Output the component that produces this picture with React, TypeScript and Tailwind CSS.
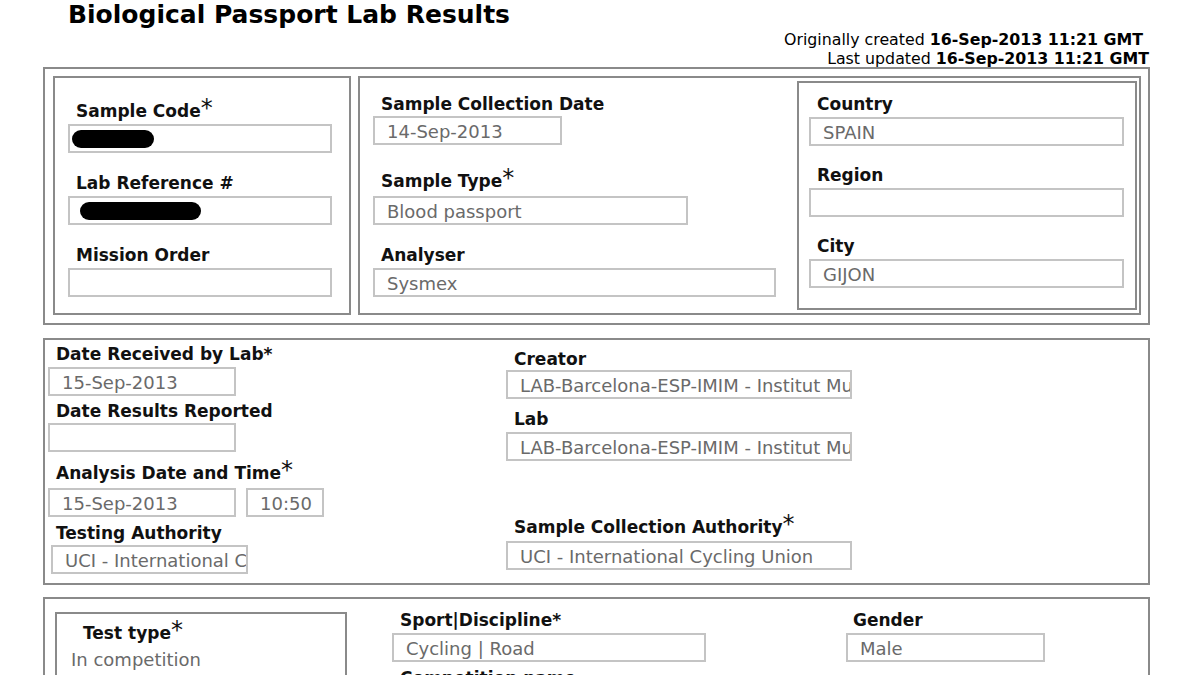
import React from "react";

const font = { fontFamily: '"DejaVu Sans", Verdana, sans-serif' };

function Star({ inline }: { inline?: boolean }) {
  if (inline) return <span>*</span>;
  return (
    <span className="font-normal text-[24px] leading-[0] align-[1px]">*</span>
  );
}

function Label({
  children,
  star,
  inline,
  className = "",
}: {
  children: React.ReactNode;
  star?: boolean;
  inline?: boolean;
  className?: string;
}) {
  return (
    <div className={`h-[20px] text-[17px] leading-[20px] font-bold text-[#111] whitespace-nowrap ${className}`}>
      {children}
      {star && <Star inline={inline} />}
    </div>
  );
}

function Input({
  value,
  width,
  className = "",
  children,
}: {
  value?: string;
  width: string;
  className?: string;
  children?: React.ReactNode;
}) {
  return (
    <div
      className={`h-[29px] ${width} border-2 border-[#c4c4c4] pl-[12px] pt-[1px] text-[18px] leading-[25px] text-[#6a6a6a] whitespace-nowrap overflow-hidden flex items-center ${className}`}
    >
      {value}
      {children}
    </div>
  );
}

function Redacted({ w, ml = "-ml-[10px]" }: { w: string; ml?: string }) {
  return <div className={`h-[18px] ${w} rounded-full bg-black ${ml}`} />;
}

export default function App() {
  return (
    <div className="w-[1200px] h-[675px] overflow-hidden bg-white text-[#111]" style={font}>
      {/* header */}
      <div className="h-[67px] flex flex-col">
        <h1 className="ml-[68px] mt-[1px] text-[25px] leading-[28px] font-bold text-black">
          Biological Passport Lab Results
        </h1>
        <div className="mr-[57px] mt-[1px] text-right text-[15.8px] leading-[19px] text-black">
          <div>
            Originally created <b>16-Sep-2013 11:21 GMT</b>
          </div>
          <div className="-mr-[6px]">
            Last updated <b>16-Sep-2013 11:21 GMT</b>
          </div>
        </div>
      </div>

      {/* section 1 */}
      <div className="ml-[43px] w-[1107px] h-[258px] border-2 border-[#8a8a8a] pl-[8px] pr-[7px] pt-[7px] pb-[8px] flex gap-[7px]">
        <div className="w-[298px] border-2 border-[#8a8a8a] pl-[13px] pt-[23px] flex flex-col">
          <Label star className="pl-[8px]">Sample Code</Label>
          <Input width="w-[264px]" className="mt-[3px]">
            <Redacted w="w-[82px]" />
          </Input>
          <Label className="pl-[8px] mt-[20px]">Lab Reference #</Label>
          <Input width="w-[264px]" className="mt-[3px]">
            <Redacted w="w-[121px]" ml="-ml-[2px]" />
          </Input>
          <Label className="pl-[8px] mt-[20px]">Mission Order</Label>
          <Input width="w-[264px]" className="mt-[3px]" />
        </div>

        <div className="flex-1 border-2 border-[#8a8a8a] pl-[13px] pr-[2px] pt-[3px] pb-[3px] flex">
          <div className="flex-1 pt-[13px] flex flex-col">
            <Label className="pl-[8px]">Sample Collection Date</Label>
            <Input width="w-[189px]" value="14-Sep-2013" className="mt-[2px]" />
            <Label star className="pl-[8px] mt-[26px]">Sample Type</Label>
            <Input width="w-[315px]" value="Blood passport" className="mt-[5px]" />
            <Label className="pl-[8px] mt-[20px]">Analyser</Label>
            <Input width="w-[403px]" value="Sysmex" className="mt-[3px]" />
          </div>
          <div className="w-[340px] border-2 border-[#8a8a8a] pl-[10px] pt-[11px] flex flex-col">
            <Label className="pl-[8px]">Country</Label>
            <Input width="w-[315px]" value="SPAIN" className="mt-[3px]" />
            <Label className="pl-[8px] mt-[19px]">Region</Label>
            <Input width="w-[315px]" className="mt-[3px]" />
            <Label className="pl-[8px] mt-[19px]">City</Label>
            <Input width="w-[315px]" value="GIJON" className="mt-[3px]" />
          </div>
        </div>
      </div>

      {/* section 2 */}
      <div className="ml-[43px] mt-[13px] w-[1107px] h-[247px] border-2 border-[#8a8a8a] pl-[3px] pt-[4px] flex">
        <div className="w-[458px] flex flex-col">
          <Label star inline className="pl-[8px]">Date Received by Lab</Label>
          <Input width="w-[188px]" value="15-Sep-2013" className="mt-[3px]" />
          <Label className="pl-[8px] mt-[5px]">Date Results Reported</Label>
          <Input width="w-[188px]" className="mt-[2px]" />
          <Label star className="pl-[8px] mt-[11px]">Analysis Date and Time</Label>
          <div className="flex gap-[10px] mt-[5px]">
            <Input width="w-[188px]" value="15-Sep-2013" />
            <Input width="w-[78px]" value="10:50" />
          </div>
          <Label className="pl-[8px] mt-[6px]">Testing Authority</Label>
          <Input width="w-[197px]" value="UCI - International Cycling Union" className="mt-[2px] ml-[3px]" />
        </div>
        <div className="flex flex-col pt-[5px]">
          <Label className="pl-[8px]">Creator</Label>
          <Input width="w-[346px]" value="LAB-Barcelona-ESP-IMIM - Institut Municipal" className="mt-[1px]" />
          <Label className="pl-[8px] mt-[10px]">Lab</Label>
          <Input width="w-[346px]" value="LAB-Barcelona-ESP-IMIM - Institut Municipal" className="mt-[3px]" />
          <Label star className="pl-[8px] mt-[56px]">Sample Collection Authority</Label>
          <Input width="w-[346px]" value="UCI - International Cycling Union" className="mt-[4px]" />
        </div>
      </div>

      {/* section 3 */}
      <div className="ml-[43px] mt-[12px] w-[1107px] h-[120px] border-2 border-[#8a8a8a] pl-[10px] pt-[13px] flex">
        <div className="w-[292px] h-[100px] border-2 border-[#8a8a8a] pl-[14px] pt-[9px] flex flex-col">
          <Label star className="pl-[12px]">Test type</Label>
          <div className="mt-[7px] text-[18px] leading-[20px] text-[#6a6a6a]">In competition</div>
        </div>
        <div className="ml-[45px] -mt-[2px] w-[454px] flex flex-col">
          <Label star inline className="pl-[8px]">Sport|Discipline</Label>
          <Input width="w-[314px]" value="Cycling | Road" className="mt-[3px]" />
          <Label className="pl-[8px] mt-[6px]">Competition name</Label>
        </div>
        <div className="-mt-[2px] flex flex-col">
          <Label className="pl-[7px]">Gender</Label>
          <Input width="w-[199px]" value="Male" className="mt-[3px]" />
        </div>
      </div>
    </div>
  );
}
